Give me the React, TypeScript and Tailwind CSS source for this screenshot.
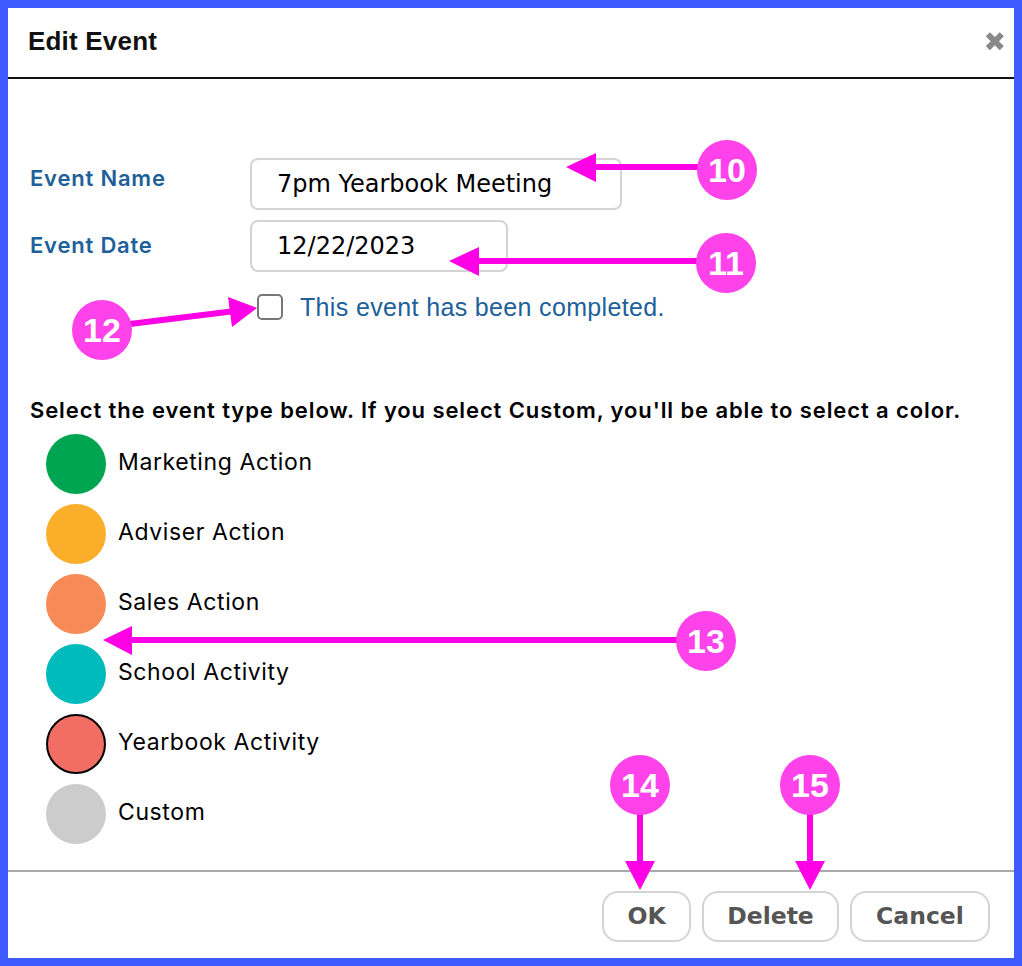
import React from "react";

const types = [
  { name: "Marketing Action", color: "bg-[#00a551]", ring: "" },
  { name: "Adviser Action", color: "bg-[#fbae2a]", ring: "" },
  { name: "Sales Action", color: "bg-[#f68b58]", ring: "" },
  { name: "School Activity", color: "bg-[#00bbbb]", ring: "" },
  { name: "Yearbook Activity", color: "bg-[#f26d64]", ring: "border-2 border-black" },
  { name: "Custom", color: "bg-[#cccccc]", ring: "" },
];

function Marker({ x, y, n }: { x: number; y: number; n: string }) {
  return (
    <g>
      <circle cx={x} cy={y} r={30} fill="#ff42ea" />
      <text
        x={x}
        y={y + 12}
        textAnchor="middle"
        fill="#fff"
        fontSize="34"
        fontFamily="Liberation Sans, Arial, sans-serif"
        fontWeight="700"
      >
        {n}
      </text>
    </g>
  );
}

function Annotations() {
  const c = "#ff00e6";
  return (
    <svg className="absolute inset-0 pointer-events-none" width={1022} height={966}>
      {/* 10 */}
      <line x1={700} y1={167} x2={590} y2={167} stroke={c} strokeWidth={6} />
      <polygon points="566,167 596,153 596,182" fill={c} />
      {/* 11 */}
      <line x1={700} y1={261} x2={470} y2={261} stroke={c} strokeWidth={6} />
      <polygon points="449,261 479,247 479,276" fill={c} />
      {/* 12 */}
      <line x1={130} y1={324} x2={235} y2={311} stroke={c} strokeWidth={6} />
      <polygon points="257,308 228,297 232,327" fill={c} />
      {/* 13 */}
      <line x1={680} y1={640} x2={125} y2={640} stroke={c} strokeWidth={6} />
      <polygon points="103,640 132,626 132,655" fill={c} />
      {/* 14 */}
      <line x1={640} y1={810} x2={640} y2={870} stroke={c} strokeWidth={6} />
      <polygon points="640,890 625,861 655,861" fill={c} />
      {/* 15 */}
      <line x1={810} y1={810} x2={810} y2={870} stroke={c} strokeWidth={6} />
      <polygon points="810,890 795,861 825,861" fill={c} />
      <Marker x={727} y={170} n="10" />
      <Marker x={726} y={263} n="11" />
      <Marker x={102} y={330} n="12" />
      <Marker x={706} y={641} n="13" />
      <Marker x={640} y={785} n="14" />
      <Marker x={810} y={785} n="15" />
    </svg>
  );
}

export default function App() {
  return (
    <div className="relative w-[1022px] h-[966px] bg-[#3f5bff] p-[8px]">
      <div className="w-full h-full bg-white flex flex-col">
        {/* Header */}
        <div className="h-[71px] border-b-2 border-[#111] flex items-center justify-between pl-[20px] pr-[8px] pb-[3px] shrink-0">
          <span className="text-[26px] font-bold tracking-[0.2px] text-[#111] font-['Liberation_Sans',Arial,sans-serif]">
            Edit Event
          </span>
          <span className="text-[27px] font-bold text-[#888] blur-[0.7px] leading-none font-['DejaVu_Sans',sans-serif]">
            ✖
          </span>
        </div>

        {/* Body */}
        <div className="flex-1 pt-[79px] pl-[22px] font-['Inter',sans-serif]">
          <div className="flex items-center">
            <span className="w-[220px] -mt-[12px] text-[22px] font-semibold tracking-[0.8px] text-[#20609a]">Event Name</span>
            <div className="w-[372px] h-[52px] border-2 border-[#d4d4d4] rounded-[8px] flex items-center pl-[25px] text-[24px] text-black font-['DejaVu_Sans',Verdana,sans-serif]">
              7pm Yearbook Meeting
            </div>
          </div>
          <div className="flex items-center mt-[10px]">
            <span className="w-[220px] -mt-[2px] text-[22px] font-semibold tracking-[0.8px] text-[#20609a]">Event Date</span>
            <div className="w-[258px] h-[52px] border-2 border-[#d4d4d4] rounded-[8px] flex items-center pl-[25px] text-[24px] text-black font-['DejaVu_Sans',Verdana,sans-serif]">
              12/22/2023
            </div>
          </div>
          <div className="flex items-center mt-[21px] pl-[227px] h-[28px]">
            <span className="w-[26px] h-[26px] border-2 border-[#777] rounded-[5px] bg-white" />
            <span className="ml-[17px] mt-[2px] text-[25px] tracking-[0.35px] text-[#20609a] font-['Liberation_Sans',Arial,sans-serif]">
              This event has been completed.
            </span>
          </div>

          <div className="mt-[74px] text-[22px] leading-[30px] font-semibold text-black tracking-[0.9px]">
            Select the event type below. If you select Custom, you'll be able to select a color.
          </div>
          <div className="flex flex-col mt-[9px] pl-[16px] gap-[10px]">
            {types.map((t) => (
              <div key={t.name} className="flex items-center h-[60px]">
                <span className={`w-[60px] h-[60px] rounded-full ${t.color} ${t.ring}`} />
                <span className="ml-[12px] -mt-[3px] text-[23px] tracking-[0.6px] text-black">{t.name}</span>
              </div>
            ))}
          </div>
        </div>

        {/* Footer */}
        <div className="h-[88px] border-t-2 border-[#aaa] flex items-center justify-end gap-[11px] pr-[24px] pt-[3px] shrink-0 font-['DejaVu_Sans',Verdana,sans-serif]">
          <button className="w-[89px] h-[51px] border-2 border-[#d4d4d4] rounded-[16px] text-[23.5px] font-bold text-[#555] bg-white">
            OK
          </button>
          <button className="w-[137px] h-[51px] border-2 border-[#d4d4d4] rounded-[16px] text-[23.5px] font-bold text-[#555] bg-white">
            Delete
          </button>
          <button className="w-[140px] h-[51px] border-2 border-[#d4d4d4] rounded-[16px] text-[23.5px] font-bold text-[#555] bg-white">
            Cancel
          </button>
        </div>
      </div>
      <Annotations />
    </div>
  );
}
